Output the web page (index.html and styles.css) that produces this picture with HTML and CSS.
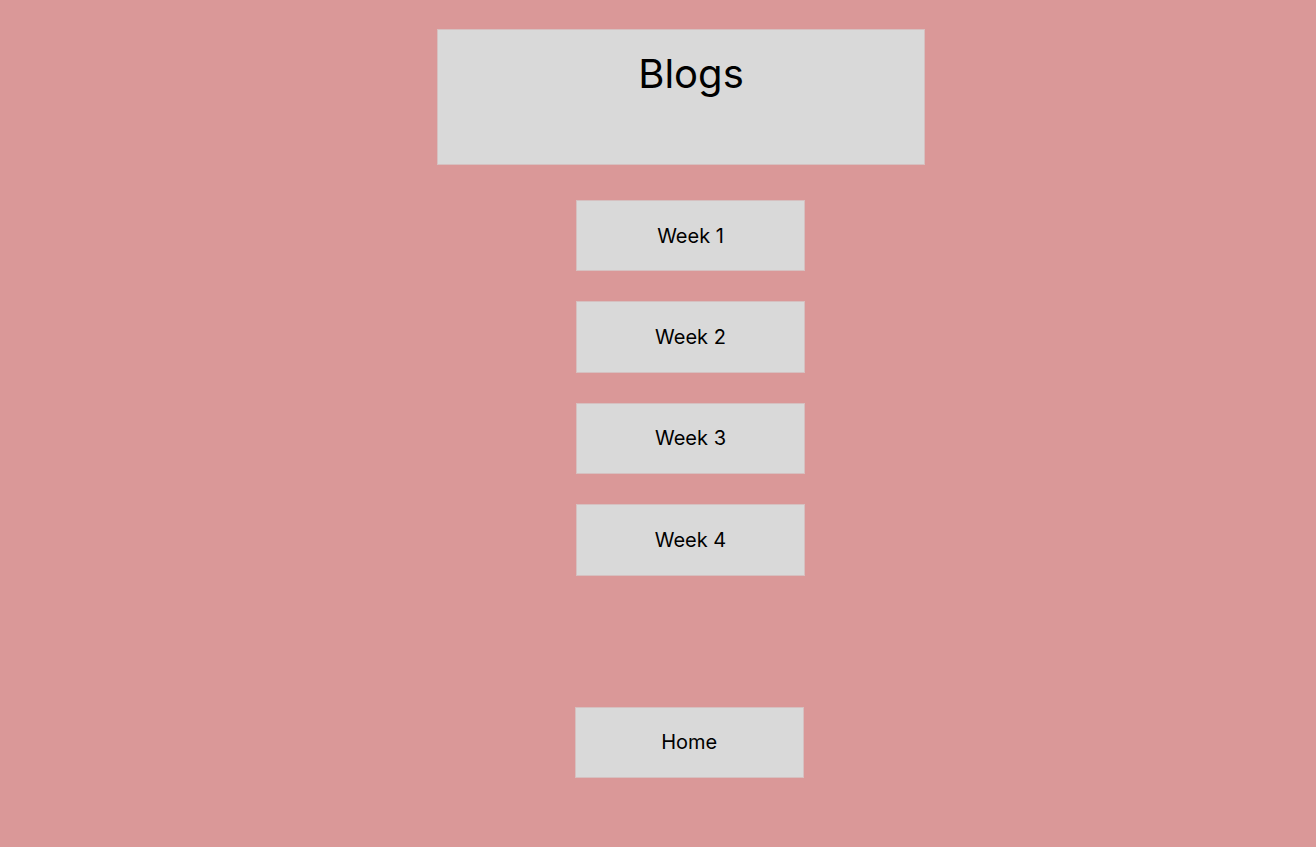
FILE: index.html
```html
<!DOCTYPE html>
<html lang="en">
<head>
<meta charset="utf-8">
<title>Blogs</title>
<link rel="stylesheet" href="styles.css">
</head>
<body>
<main class="page">
  <header class="title-box"><h1 class="title">Blogs</h1></header>
  <nav class="weeks">
    <a class="btn week" href="#">Week 1</a>
    <a class="btn week" href="#">Week 2</a>
    <a class="btn week" href="#">Week 3</a>
    <a class="btn week" href="#">Week 4</a>
  </nav>
  <a class="btn home" href="#">Home</a>
</main>
</body>
</html>
```
FILE: styles.css
```css
html, body {
  margin: 0;
  padding: 0;
}
body {
  background: #da9898;
  font-family: Inter, "Noto Sans", sans-serif;
  color: #000;
  min-height: 847px;
}
.page {
  display: flex;
  flex-direction: column;
  align-items: flex-start;
  padding-top: 29px;
  margin-left: 437px;
  width: 488px;
}
.title-box {
  box-sizing: border-box;
  width: 488px;
  height: 136px;
  background: #d9d9d9;
  border: 1px solid #d6c0c0;
  padding: 20px 0 0 20px;
}
.title {
  margin: 0;
  text-align: center;
  font-weight: 400;
  font-size: 40px;
  line-height: 48px;
}
.weeks {
  display: flex;
  flex-direction: column;
  gap: 30px;
  margin-top: 35px;
  margin-left: 139px;
}
.btn {
  box-sizing: border-box;
  display: flex;
  align-items: center;
  justify-content: center;
  width: 229px;
  height: 71.4px;
  background: #d9d9d9;
  border: 1px solid #d6c0c0;
  text-decoration: none;
  color: #000;
  font-size: 20px;
}
.home {
  margin-top: 131.5px;
  margin-left: 138px;
  width: 228.5px;
  height: 70.5px;
}
```
